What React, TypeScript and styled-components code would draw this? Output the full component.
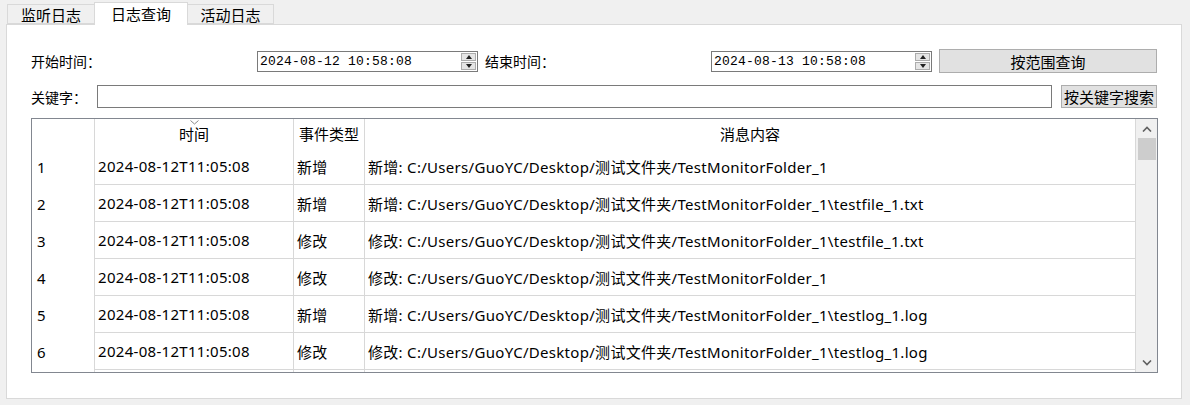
import * as React from "react";
import styled, { createGlobalStyle } from "styled-components";

const GlobalStyle = createGlobalStyle`
  html, body { margin: 0; padding: 0; background: #f0f0f0; }
  body { font-family: "Noto Sans", "Noto Sans CJK SC", sans-serif; }
`;

const Window = styled.div`
  width: 1190px;
  height: 405px;
  background: #f0f0f0;
  box-sizing: border-box;
  padding: 4px 8px 0 6px;
  font-family: "Noto Sans CJK SC", sans-serif;
  font-size: 14px;
  color: #000;
`;

const TabBar = styled.div`
  display: flex;
  align-items: flex-end;
  height: 20px;
  padding-left: 1px;
  position: relative;
  z-index: 1;
`;

const Tab = styled.div<{ $active?: boolean; $width: number }>`
  box-sizing: border-box;
  width: ${(p) => p.$width}px;
  height: ${(p) => (p.$active ? 23 : 20)}px;
  margin-bottom: ${(p) => (p.$active ? -1 : 0)}px;
  background: ${(p) => (p.$active ? "#fff" : "#f0f0f0")};
  border: 1px solid #d9d9d9;
  border-bottom: ${(p) => (p.$active ? "none" : "1px solid #d9d9d9")};
  margin-left: ${(p) => (p.$active ? -1 : 0)}px;
  margin-right: ${(p) => (p.$active ? -1 : 0)}px;
  display: flex;
  align-items: center;
  justify-content: center;
  padding-bottom: ${(p) => (p.$active ? 2 : 0)}px;
  line-height: 1;
  font-size: 15px;
`;

const Pane = styled.div`
  box-sizing: border-box;
  height: 375px;
  background: #fff;
  border: 1px solid #d9d9d9;
  padding: 24px 24px 0 24px;
  display: flex;
  flex-direction: column;
`;

const FormRow = styled.div<{ $gap: number; $mt?: number }>`
  display: flex;
  align-items: center;
  gap: ${(p) => p.$gap}px;
  margin-top: ${(p) => p.$mt ?? 0}px;
`;

const Label = styled.div<{ $w: number }>`
  width: ${(p) => p.$w}px;
  flex: none;
  white-space: nowrap;
`;

const SpinBox = styled.div`
  box-sizing: border-box;
  width: 221px;
  height: 21px;
  flex: none;
  border: 1px solid #7a7a7a;
  display: flex;
  align-items: center;
  padding: 0 1px 0 2px;
`;

const SpinText = styled.div`
  flex: 1;
  font-family: "Liberation Mono", monospace;
  font-size: 13px;
  letter-spacing: 0.2px;
`;

const SpinButtons = styled.div`
  width: 15px;
  height: 17px;
  display: flex;
  flex-direction: column;
  gap: 1px;
`;

const SpinBtn = styled.div<{ $down?: boolean }>`
  flex: 1;
  background: #e5e5e5;
  border: 1px solid #acacac;
  display: flex;
  align-items: center;
  justify-content: center;
  &::after {
    content: "";
    border-left: 3.5px solid transparent;
    border-right: 3.5px solid transparent;
    ${(p) => (p.$down ? "border-top: 4px solid #222;" : "border-bottom: 4px solid #222;")}
  }
`;

const Button = styled.div<{ $w?: number; $h: number }>`
  box-sizing: border-box;
  ${(p) => (p.$w ? `width: ${p.$w}px; flex: none;` : "flex: 1;")}
  height: ${(p) => p.$h}px;
  background: #e1e1e1;
  border: 1px solid #adadad;
  display: flex;
  align-items: center;
  justify-content: center;
  white-space: nowrap;
  font-size: 15px;
`;

const TextInput = styled.div`
  box-sizing: border-box;
  flex: 1;
  height: 23px;
  border: 1px solid #7a7a7a;
  background: #fff;
`;

const Table = styled.div`
  margin-top: 10px;
  margin-right: -1px;
  height: 255px;
  box-sizing: border-box;
  border: 1px solid #828790;
  display: flex;
  overflow: hidden;
  font-family: "Noto Sans", "Noto Sans CJK SC", sans-serif;
  font-size: 15px;
  letter-spacing: 0.3px;
`;

const Grid = styled.div`
  flex: 1;
  display: grid;
  grid-template-columns: 63px 199px 71px 1fr;
  grid-auto-rows: 37px;
  grid-template-rows: 29px;
  align-content: start;
`;

const HeadCell = styled.div`
  position: relative;
  display: flex;
  align-items: center;
  justify-content: center;
  border-right: 1px solid #d8d8d8;
  font-family: "Noto Sans CJK SC", sans-serif;
  font-size: 15px;
  letter-spacing: 0;
`;

const SortMark = styled.svg`
  position: absolute;
  top: 1px;
  left: 50%;
  margin-left: -4px;
`;

const RowNum = styled.div`
  display: flex;
  align-items: center;
  padding-left: 5px;
  border-right: 1px solid #d8d8d8;
`;

const Cell = styled.div`
  display: flex;
  align-items: center;
  padding-left: 3px;
  white-space: nowrap;
  overflow: hidden;
  border-right: 1px solid #d8d8d8;
  border-bottom: 1px solid #d8d8d8;
`;

const ScrollBar = styled.div`
  width: 21px;
  flex: none;
  background: #f0f0f0;
  display: flex;
  flex-direction: column;
  align-items: center;
`;

const ScrollArrow = styled.svg`
  flex: none;
  margin: 7px 0 6px;
`;

const Thumb = styled.div`
  width: 18px;
  height: 22px;
  background: #cdcdcd;
  flex: none;
`;

const Track = styled.div`
  flex: 1;
`;

const rows = [
  ["1", "新增", "新增: C:/Users/GuoYC/Desktop/测试文件夹/TestMonitorFolder_1"],
  ["2", "新增", "新增: C:/Users/GuoYC/Desktop/测试文件夹/TestMonitorFolder_1\\testfile_1.txt"],
  ["3", "修改", "修改: C:/Users/GuoYC/Desktop/测试文件夹/TestMonitorFolder_1\\testfile_1.txt"],
  ["4", "修改", "修改: C:/Users/GuoYC/Desktop/测试文件夹/TestMonitorFolder_1"],
  ["5", "新增", "新增: C:/Users/GuoYC/Desktop/测试文件夹/TestMonitorFolder_1\\testlog_1.log"],
  ["6", "修改", "修改: C:/Users/GuoYC/Desktop/测试文件夹/TestMonitorFolder_1\\testlog_1.log"],
];

const Spin = ({ value }: { value: string }) => (
  <SpinBox>
    <SpinText>{value}</SpinText>
    <SpinButtons>
      <SpinBtn />
      <SpinBtn $down />
    </SpinButtons>
  </SpinBox>
);

export default function App() {
  return (
    <Window>
      <GlobalStyle />
      <TabBar>
        <Tab $width={88}>监听日志</Tab>
        <Tab $width={94} $active>日志查询</Tab>
        <Tab $width={87}>活动日志</Tab>
      </TabBar>
      <Pane>
        <FormRow $gap={7}>
          <Label $w={219}>开始时间：</Label>
          <Spin value="2024-08-12 10:58:08" />
          <Label $w={219}>结束时间：</Label>
          <Spin value="2024-08-13 10:58:08" />
          <Button $h={24}>按范围查询</Button>
        </FormRow>
        <FormRow $gap={9} $mt={12}>
          <Label $w={57}>关键字：</Label>
          <TextInput />
          <Button $w={96} $h={23}>按关键字搜索</Button>
        </FormRow>
        <Table>
          <Grid>
            <HeadCell />
            <HeadCell>
              <SortMark width="9" height="5" viewBox="0 0 9 5">
                <path d="M0.5 0.5 L4.5 4 L8.5 0.5" fill="none" stroke="#8a8a8a" strokeWidth="1" />
              </SortMark>
              时间
            </HeadCell>
            <HeadCell>事件类型</HeadCell>
            <HeadCell>消息内容</HeadCell>
            {rows.map(([n, type, msg]) => (
              <React.Fragment key={n}>
                <RowNum>{n}</RowNum>
                <Cell>2024-08-12T11:05:08</Cell>
                <Cell>{type}</Cell>
                <Cell>{msg}</Cell>
              </React.Fragment>
            ))}
            <RowNum />
            <Cell />
            <Cell />
            <Cell />
          </Grid>
          <ScrollBar>
            <ScrollArrow width="10" height="6" viewBox="0 0 10 6">
              <path d="M1 5.5 L5 1.5 L9 5.5" fill="none" stroke="#606060" strokeWidth="1.6" />
            </ScrollArrow>
            <Thumb />
            <Track />
            <ScrollArrow width="10" height="6" viewBox="0 0 10 6">
              <path d="M1 0.5 L5 4.5 L9 0.5" fill="none" stroke="#606060" strokeWidth="1.6" />
            </ScrollArrow>
          </ScrollBar>
        </Table>
      </Pane>
    </Window>
  );
}
